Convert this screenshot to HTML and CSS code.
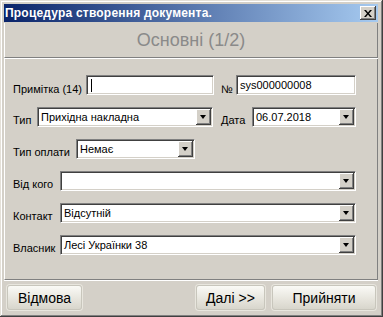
FILE: index.html
```html
<!DOCTYPE html>
<html lang="uk">
<head>
    <meta charset="UTF-8">
    <title>Процедура створення документа</title>
    <link rel="stylesheet" href="styles.css">
</head>
<body>

<div class="window">
    <div class="titlebar">
        <span class="title">Процедура створення документа.</span>
        <span class="close">
            <svg width="8" height="7" viewBox="0 0 8 7"><path d="M0 0h2l2 2.5 2-2.5h2l-3 3.5 3 3.5h-2l-2-2.5-2 2.5h-2l3-3.5z" fill="#000"/></svg>
        </span>
    </div>

    <div class="header">Основні (1/2)</div>

    <div class="form">
        <div class="row">
            <span class="lbl lbl-note">Примітка (14)</span>
            <div class="field w-note"><span class="caret"></span></div>
            <span class="lbl lbl-num">№</span>
            <div class="field w-num">sys000000008</div>
        </div>

        <div class="row">
            <span class="lbl lbl-type">Тип</span>
            <div class="field combo w-type">Прихідна накладна<span class="drop"></span></div>
            <span class="lbl lbl-date">Дата</span>
            <div class="field combo w-date">06.07.2018<span class="drop"></span></div>
        </div>

        <div class="row">
            <span class="lbl lbl-pay">Тип оплати</span>
            <div class="field combo w-pay">Немає<span class="drop"></span></div>
        </div>

        <div class="row">
            <span class="lbl lbl-wide">Від кого</span>
            <div class="field combo w-wide"><span class="drop"></span></div>
        </div>

        <div class="row">
            <span class="lbl lbl-wide">Контакт</span>
            <div class="field combo w-wide">Відсутній<span class="drop"></span></div>
        </div>

        <div class="row">
            <span class="lbl lbl-wide">Власник</span>
            <div class="field combo w-wide">Лесі Українки 38<span class="drop"></span></div>
        </div>
    </div>

    <div class="footer">
        <button class="btn btn-cancel">Відмова</button>
        <span class="spacer"></span>
        <button class="btn btn-next">Далі &gt;&gt;</button>
        <button class="btn btn-ok">Прийняти</button>
    </div>
</div>

</body>
</html>
```

FILE: styles.css
```css
body {
    margin: 0;
    background-color: #d4d0c8;
    font-family: "Liberation Sans", Arial, sans-serif;
    font-size: 11px;
    color: #000;
}

.window {
    width: 383px;
    height: 317px;
    box-sizing: border-box;
    padding: 4px 5px 4px 4px;
    display: flex;
    flex-direction: column;
    background-color: #d4d0c8;
    box-shadow: inset -1px -1px #404040, inset 1px 1px #e4e0d8,
                inset -2px -2px #808080, inset 2px 2px #fff;
}

.titlebar {
    height: 18px;
    display: flex;
    align-items: center;
    justify-content: space-between;
    padding: 0 2px 0 1px;
    background: linear-gradient(to right, #0a246a, #a6caf0);
}

.title {
    color: #fff;
    font-weight: bold;
    font-size: 12px;
    letter-spacing: 0.2px;
}

.close {
    width: 16px;
    height: 14px;
    box-sizing: border-box;
    display: flex;
    align-items: center;
    justify-content: center;
    background-color: #d4d0c8;
    box-shadow: inset -1px -1px #404040, inset 1px 1px #fff, inset -2px -2px #808080;
}

.header {
    margin-top: 1px;
    height: 34px;
    display: flex;
    align-items: center;
    justify-content: center;
    font-size: 18px;
    color: #8a8a8a;
    border-left: 1px solid #fff;
    border-right: 1px solid #808080;
    border-bottom: 1px solid #808080;
    box-shadow: 0 1px #fff;
}

.form {
    flex: 1;
    display: flex;
    flex-direction: column;
    gap: 12px;
    padding: 16px 0 0 8px;
    border-left: 1px solid #fff;
    border-right: 1px solid #808080;
    border-bottom: 1px solid #808080;
    margin-top: 1px;
}

.row {
    display: flex;
    align-items: flex-end;
    height: 20px;
}

.lbl {
    line-height: 12px;
    white-space: nowrap;
}

.lbl-note { width: 73px; }
.lbl-num { width: 15px; margin-left: 7px; }
.lbl-type { width: 24px; margin-bottom: 1px; }
.lbl-date { width: 31px; margin-left: 8px; margin-bottom: 1px; }
.lbl-pay { width: 63px; margin-bottom: 1px; }
.lbl-wide { width: 47px; margin-bottom: 1px; }

.field {
    position: relative;
    height: 20px;
    box-sizing: border-box;
    padding: 0 3px;
    display: flex;
    align-items: center;
    background-color: #fff;
    border: 1px solid;
    border-color: #808080 #fff #fff #808080;
    box-shadow: inset 1px 1px #404040, inset -1px -1px #d4d0c8;
    white-space: nowrap;
}

.w-note { width: 128px; }
.w-num { width: 120px; }
.w-type { width: 176px; }
.w-date { width: 104px; }
.w-pay { width: 119px; }
.w-wide { width: 296px; }

.caret {
    width: 1px;
    height: 13px;
    margin-left: 1px;
    background-color: #000;
}

.drop {
    position: absolute;
    top: 1px;
    right: 1px;
    width: 15px;
    height: 16px;
    box-sizing: border-box;
    background-color: #d4d0c8;
    box-shadow: inset -1px -1px #404040, inset 1px 1px #fff, inset -2px -2px #808080;
}

.drop::after {
    content: "";
    position: absolute;
    left: 4px;
    top: 6px;
    border-left: 3.5px solid transparent;
    border-right: 3.5px solid transparent;
    border-top: 4px solid #000;
}

.footer {
    height: 28px;
    display: flex;
    align-items: flex-start;
    gap: 7px;
    padding: 4px 2px 0 3px;
    border-top: 1px solid #fff;
}

.spacer {
    flex: 1;
}

.btn {
    height: 25px;
    padding: 0;
    font-family: "Liberation Sans", Arial, sans-serif;
    font-size: 14px;
    color: #000;
    border: 1px solid #c8c6bc;
    border-radius: 3px;
    background: linear-gradient(to bottom, #fafaf6, #e6e4dc 60%, #d8d6cc);
    box-shadow: 0 0 0 1px #e8e6de;
}

.btn-cancel { width: 75px; }
.btn-next { width: 69px; }
.btn-ok { width: 104px; }
```
